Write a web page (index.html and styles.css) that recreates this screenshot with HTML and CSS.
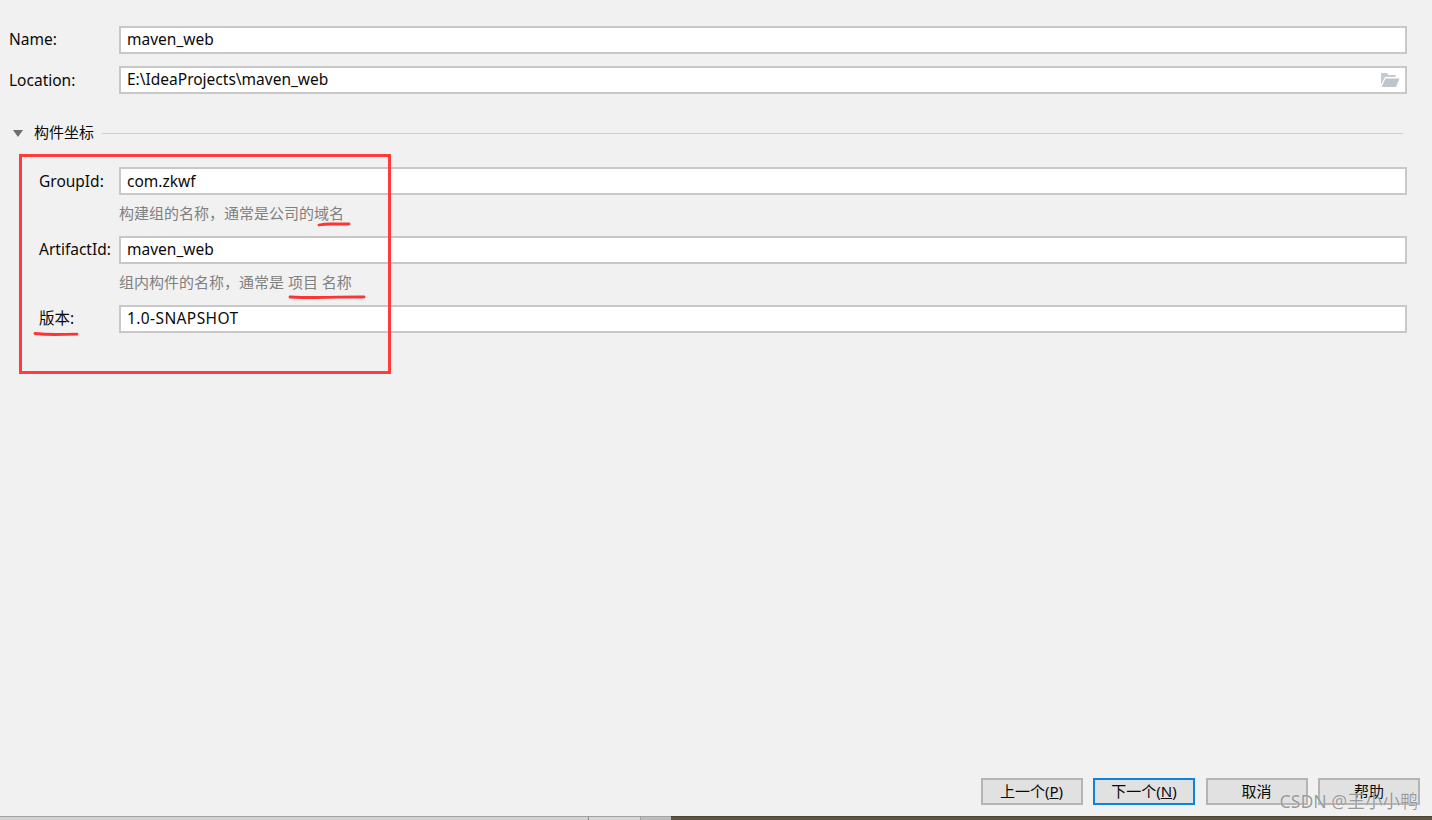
FILE: index.html
```html
<!DOCTYPE html>
<html lang="zh">
<head>
<meta charset="utf-8">
<title>New Project</title>
<link rel="stylesheet" href="styles.css">
</head>
<body>
<div class="dialog">
  <main class="form">
    <div class="grid top">
      <label class="label">Name:</label>
      <div class="input">maven_web</div>
      <label class="label label-low">Location:</label>
      <div class="input with-icon">E:\IdeaProjects\maven_web
        <svg class="folder" width="20" height="16" viewBox="0 0 20 16" aria-hidden="true">
          <path d="M1 1h6l1.500 2h7v2H5L1 13z" fill="#c3ccd2"/>
          <path d="M1.500 15l4-8.500H19.500L16 15z" fill="#bcc6cc"/>
        </svg>
      </div>
    </div>
    <div class="section">
      <span class="triangle"></span>
      <span class="section-title">构件坐标</span>
      <span class="rule"></span>
    </div>
    <div class="grid coords">
      <label class="label label-low">GroupId:</label>
      <div class="input input-low">com.zkwf</div>
      <div class="hint">构建组的名称，通常是公司的域名</div>
      <label class="label">ArtifactId:</label>
      <div class="input">maven_web</div>
      <div class="hint">组内构件的名称，通常是 项目 名称</div>
      <label class="label">版本:</label>
      <div class="input input-caps">1.0-SNAPSHOT</div>
    </div>
  </main>
  <footer class="buttons">
    <button class="btn">上一个(<u>P</u>)</button>
    <button class="btn primary">下一个(<u>N</u>)</button>
    <button class="btn">取消</button>
    <button class="btn">帮助</button>
  </footer>
  <div class="strip">
    <span class="seg seg-a"></span>
    <span class="seg seg-b"></span>
    <span class="seg seg-c"></span>
    <span class="seg seg-d"></span>
  </div>
  <div class="redbox"></div>
  <svg class="marks" width="1432" height="820" viewBox="0 0 1432 820" aria-hidden="true">
    <path d="M319 225q5-1 12-1t18 0" />
    <path d="M290 297q12 .5 24 .5t25-.3t25-.2" />
    <path d="M35 333.500q10 1 20 1t22-.3" />
  </svg>
  <div class="watermark">CSDN @王小小鸭</div>
</div>
</body>
</html>
```

FILE: styles.css
```css
* { box-sizing: border-box; }
html, body { margin: 0; height: 100%; }
body {
  background: #f1f1f1;
  color: #0a0a0a;
  font-family: "Noto Sans", "Noto Sans CJK SC", sans-serif;
  font-size: 15px;
  overflow: hidden;
}
.dialog {
  position: relative;
  width: 1432px;
  height: 820px;
  display: flex;
  flex-direction: column;
}
.form { flex: 1; padding: 26px 25px 0 9px; }
.grid { display: grid; align-items: center; }
.top { grid-template-columns: 110px 1fr; row-gap: 12px; }
.coords { grid-template-columns: 80px 1fr; padding-left: 30px; }
.label { font-size: 15.500px; line-height: 20px; padding-bottom: 2px; white-space: nowrap; }
.label-low { padding-bottom: 0; }
.input {
  height: 28px;
  padding: 0 6px 2px;
  font-size: 15.500px;
  line-height: 22px;
  background: #fff;
  border: 2px solid #c8c8c8;
  white-space: nowrap;
  display: flex;
  align-items: center;
  justify-content: space-between;
}
.input-low { padding-bottom: 0; }
.input-caps { letter-spacing: 0.400px; }
.folder { margin: 2px -1px 0 0; }
.hint {
  grid-column: 2;
  height: 41px;
  line-height: 20px;
  padding-top: 8px;
  color: #808080;
  font-size: 15px;
}
.section {
  display: flex;
  align-items: center;
  height: 20px;
  margin: 29px 4px 24px 4px;
}
.triangle {
  width: 0;
  height: 0;
  border-left: 5.500px solid transparent;
  border-right: 5.500px solid transparent;
  border-top: 7px solid #6e6e6e;
  margin-right: 10px;
}
.section-title { font-size: 15px; line-height: 20px; margin: 0 8px 2px 1px; }
.rule { flex: 1; height: 1px; background: #cfcfcf; }
.buttons {
  display: flex;
  justify-content: flex-end;
  gap: 10.500px;
  padding: 0 12px 11px 0;
}
.btn {
  width: 102px;
  height: 27px;
  padding: 0 0 1px;
  background: #e1e1e1;
  border: 2px solid #b4b4b4;
  color: #0a0a0a;
  font: inherit;
  line-height: 22px;
}
.primary { border-color: #0a84e0; }
.strip { display: flex; height: 4px; }
.seg { display: block; height: 4px; border-top: 1px solid #a3a3a3; }
.seg-a { width: 588px; background: #d2d2d2; }
.seg-b { width: 52px; background: #d6d6d6; border-left: 1px solid #888; }
.seg-c { width: 31px; background: #bdbdbd; border-left: 1px solid #a0a0a0; }
.seg-d { flex: 1; background: #5c5444; border-top-color: #4a4438; }
.redbox {
  position: absolute;
  left: 19px;
  top: 154px;
  width: 372px;
  height: 220px;
  border: 3px solid #ff3b3b;
}
.marks { position: absolute; left: 0; top: 0; pointer-events: none; }
.marks path { fill: none; stroke: #ff3333; stroke-width: 2.800; stroke-linecap: round; }
.watermark {
  position: absolute;
  right: 14px;
  top: 790px;
  line-height: 22px;
  font-size: 17.700px;
  color: rgba(120, 120, 120, 0.75);
  text-shadow: 0 0 1px #fff;
  white-space: nowrap;
}
```
